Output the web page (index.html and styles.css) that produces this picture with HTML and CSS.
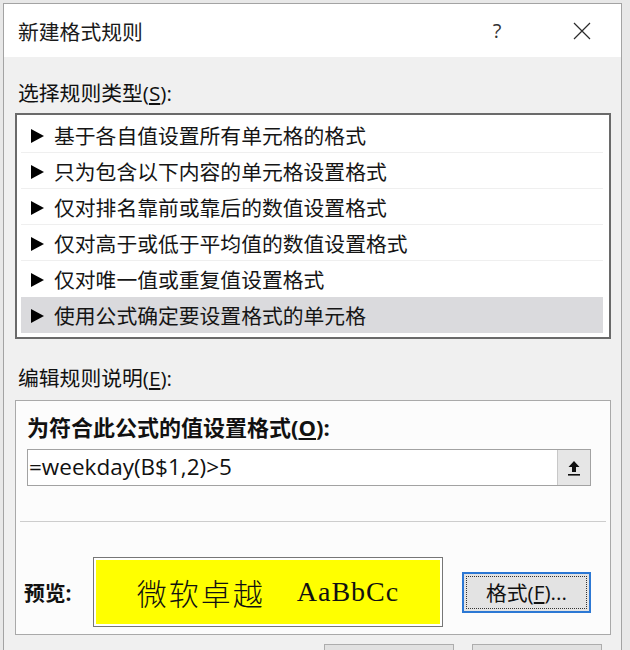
FILE: index.html
```html
<!DOCTYPE html>
<html lang="zh-CN">
<head>
  <meta charset="UTF-8" />
  <title>新建格式规则</title>
  <link rel="stylesheet" href="styles.css">
</head>
<body>
  <div class="window">
    <!-- Title bar -->
    <div class="titlebar">
      <span class="title">新建格式规则</span>
      <span class="help">?</span>
      <span class="close">
        <svg width="18" height="18" viewBox="0 0 18 18"><path d="M1 1 L17 17 M17 1 L1 17" stroke="#2b2b2b" stroke-width="1.2" fill="none"/></svg>
      </span>
    </div>

    <div class="body">
      <div class="label">选择规则类型(<u>S</u>):</div>
      <ul class="rule-list">
        <li class="rule"><span class="arrow"></span>基于各自值设置所有单元格的格式</li>
        <li class="rule"><span class="arrow"></span>只为包含以下内容的单元格设置格式</li>
        <li class="rule"><span class="arrow"></span>仅对排名靠前或靠后的数值设置格式</li>
        <li class="rule"><span class="arrow"></span>仅对高于或低于平均值的数值设置格式</li>
        <li class="rule"><span class="arrow"></span>仅对唯一值或重复值设置格式</li>
        <li class="rule selected"><span class="arrow"></span>使用公式确定要设置格式的单元格</li>
      </ul>

      <div class="label label-edit">编辑规则说明(<u>E</u>):</div>
      <div class="edit-box">
        <div class="bold-label">为符合此公式的值设置格式(<u>O</u>):</div>
        <div class="formula">
          <span class="formula-text">=weekday(B$1,2)&gt;5</span>
          <span class="ref-btn">
            <svg width="14" height="16" viewBox="0 0 14 16"><path d="M7 1 L1.5 7 H5 V12 H9 V7 H12.5 Z" fill="#111"/><rect x="1" y="14" width="12" height="1.6" fill="#111"/></svg>
          </span>
        </div>
        <div class="sep"></div>
        <div class="preview-row">
          <span class="preview-label">预览:</span>
          <div class="preview"><span class="pv-cjk">微软卓越</span><span class="pv-latin">AaBbCc</span></div>
          <button class="format-btn"><span class="focus">格式(<u>F</u>)...</span></button>
        </div>
      </div>

      <!-- OK / Cancel, only their top edges fit in the window -->
      <div class="buttons">
        <button class="btn"></button>
        <button class="btn"></button>
      </div>
    </div>
  </div>
</body>
</html>
```
FILE: styles.css
```css
body {
  margin: 0;
  background: #e8e8e8;
  font-family: "Open Sans", "Noto Sans CJK SC", sans-serif;
  color: #111;
  overflow: hidden;
}
.window {
  margin: 3px 8px 0 3px;
  border: 1px solid #a3a3a3;
  background: #f0f0f0;
  height: 700px;
}

/* Title bar */
.titlebar {
  height: 53px;
  background: #fff;
  display: flex;
  align-items: center;
  padding: 0 16px 0 14px;
}
.title {
  flex: 1;
  font-size: 20.8px;
  color: #1a1a1a;
}
.help {
  width: 46px;
  margin-right: 39px;
  text-align: center;
  font-size: 20px;
  color: #333;
  font-family: "Open Sans", sans-serif;
}
.close {
  width: 46px;
  display: flex;
  justify-content: center;
}

/* Dialog body */
.body {
  padding: 22px 10px 0 11px;
}
.label {
  font-size: 20.8px;
  line-height: 28px;
  padding-left: 3px;
  margin-bottom: 6px;
}
.label-edit {
  margin-top: 25px;
  margin-bottom: 8px;
}

.rule-list {
  list-style: none;
  margin: 0;
  padding: 2px 6px 4px 4px;
  border: 2px solid #6a6a6a;
  background: #fff;
}
.rule {
  height: 36px;
  box-sizing: border-box;
  display: flex;
  align-items: center;
  padding-left: 10px;
  font-size: 20.8px;
  color: #151515;
  border-bottom: 1px solid #efefef;
}
.rule:nth-child(5),
.rule.selected { border-bottom: none; }
.rule.selected { background: #dadadd; }
.arrow {
  width: 0;
  height: 0;
  border-top: 7px solid transparent;
  border-bottom: 7px solid transparent;
  border-left: 13px solid #000;
  margin-right: 10px;
  margin-top: 2px;
}

/* Edit rule description */
.edit-box {
  border: 1px solid #a9a9a9;
  background: #fcfcfc;
  padding: 12px 0 7px 0;
}
.bold-label {
  font-size: 22px;
  font-weight: bold;
  line-height: 28px;
  padding-left: 11px;
}
.formula {
  margin: 8px 19px 0 11px;
  height: 37px;
  box-sizing: border-box;
  border: 1px solid #a2a2a2;
  background: #fff;
  display: flex;
  align-items: stretch;
}
.formula-text {
  flex: 1;
  font-size: 22.5px;
  line-height: 34px;
  padding-left: 1px;
}
.ref-btn {
  width: 32px;
  background: #e6e6e6;
  border-left: 1px solid #c8c8c8;
  display: flex;
  align-items: center;
  justify-content: center;
}
.sep {
  margin: 35px 4px 0 4px;
  border-top: 1px solid #cdcdcd;
}

.preview-row {
  margin-top: 35px;
  display: flex;
  align-items: center;
}
.preview-label {
  width: 69px;
  margin-left: 8px;
  font-size: 20.8px;
  font-weight: bold;
}
.preview {
  width: 350px;
  height: 70px;
  box-sizing: border-box;
  border: 1px solid #767676;
  box-shadow: inset 0 0 0 2px #fff;
  background: #ffff00;
  display: flex;
  align-items: center;
  justify-content: center;
  gap: 32px;
}
.pv-cjk {
  font-family: "Noto Sans CJK SC", sans-serif;
  font-weight: 300;
  font-size: 30px;
  letter-spacing: 2px;
}
.pv-latin {
  font-family: "Liberation Serif", serif;
  font-size: 28px;
  letter-spacing: 1px;
}
.format-btn {
  margin-left: 19px;
  width: 129px;
  height: 41px;
  padding: 2px;
  border: 2px solid #2c78d4;
  background: #e3e3e3;
  font-family: inherit;
  font-size: 20.8px;
  color: #111;
}
.focus {
  display: flex;
  align-items: center;
  justify-content: center;
  height: 100%;
  border: 1px dotted #333;
  box-sizing: border-box;
}

.buttons {
  margin: 9px 9px 0 0;
  display: flex;
  justify-content: flex-end;
  gap: 18px;
}
.btn {
  width: 130px;
  height: 34px;
  border: 1px solid #adadad;
  background: #e1e1e1;
}
```
